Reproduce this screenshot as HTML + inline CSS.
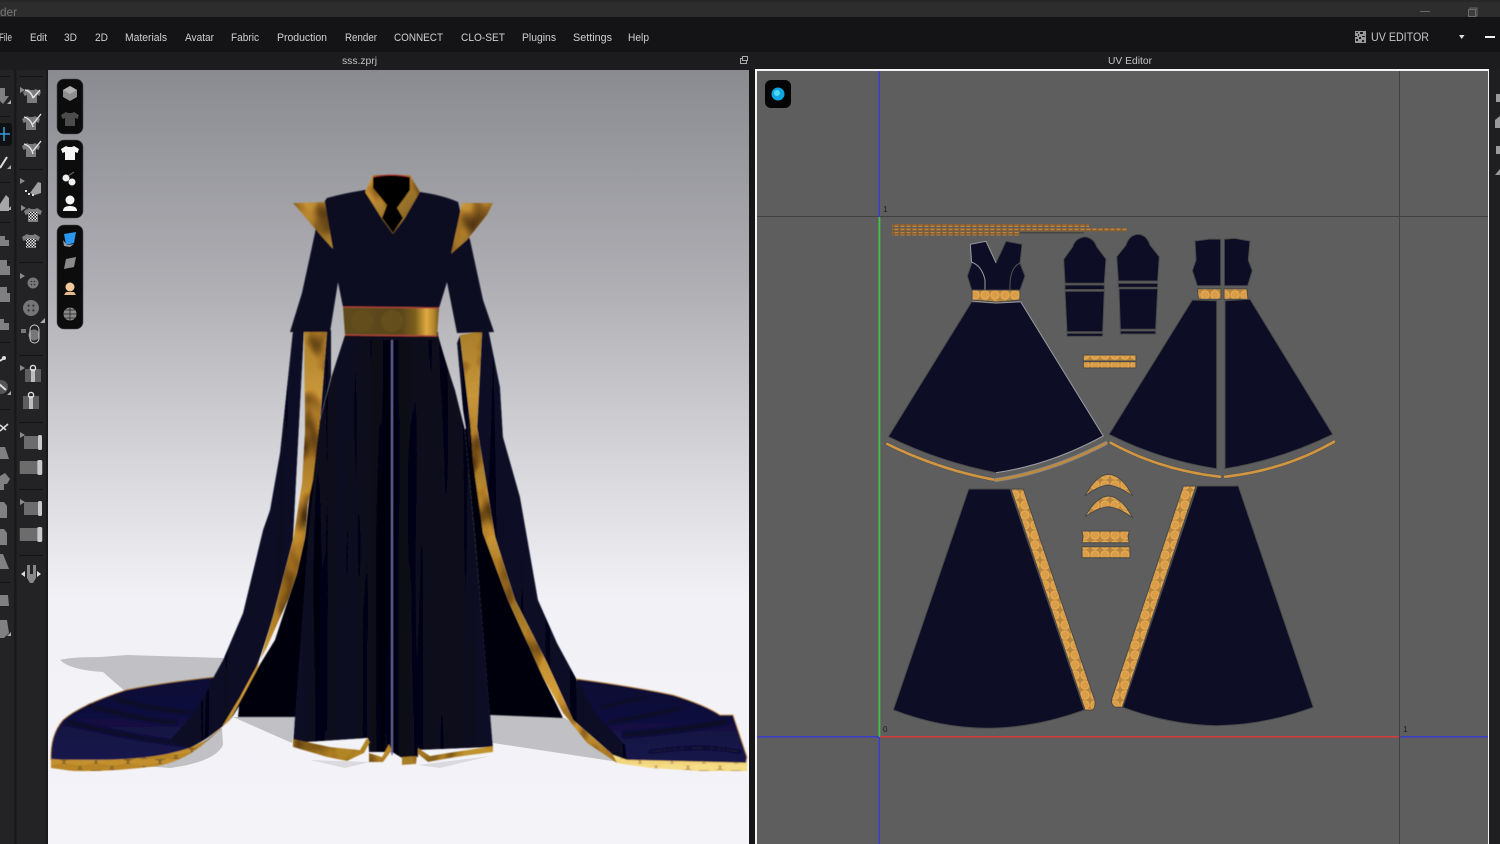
<!DOCTYPE html>
<html><head><meta charset="utf-8"><title>UV Editor</title>
<style>html,body{margin:0;padding:0;background:#161618;width:1500px;height:844px;overflow:hidden}svg{display:block}text{font-family:"Liberation Sans",sans-serif}</style></head>
<body>
<svg xmlns="http://www.w3.org/2000/svg" width="1500" height="844" viewBox="0 0 1500 844">
<defs>
<linearGradient id="vp" x1="0" y1="0" x2="0" y2="1"><stop offset="0" stop-color="#8a8b90"/><stop offset=".27" stop-color="#adadb2"/><stop offset=".54" stop-color="#dcdce0"/><stop offset=".685" stop-color="#f1f1f6"/><stop offset="1" stop-color="#f3f3f8"/></linearGradient>
<pattern id="uvg" width="10" height="10" patternUnits="userSpaceOnUse"><rect width="10" height="10" fill="#b98640"/><circle cx="5" cy="5" r="4.700" fill="#e3a850"/><circle cx="5" cy="5" r="2.600" fill="#dc9d48" stroke="#cf9240" stroke-width=".5"/></pattern>
<pattern id="uvs" width="6" height="3" patternUnits="userSpaceOnUse"><rect width="6" height="3" fill="#7f5c32"/><rect x=".5" y=".6" width="4" height="1.600" fill="#b98645"/></pattern>
<pattern id="chk" width="3" height="3" patternUnits="userSpaceOnUse"><rect width="3" height="3" fill="#eee"/><rect width="1.500" height="1.500" fill="#222"/><rect x="1.500" y="1.500" width="1.500" height="1.500" fill="#222"/></pattern>
<linearGradient id="gold" x1="0" y1="0" x2="0" y2="1"><stop offset="0" stop-color="#a87e2c"/><stop offset=".15" stop-color="#c8963a"/><stop offset=".3" stop-color="#a47628"/><stop offset=".45" stop-color="#d4a03a"/><stop offset=".6" stop-color="#94691f"/><stop offset=".75" stop-color="#c08e30"/><stop offset=".88" stop-color="#dca63c"/><stop offset="1" stop-color="#a07426"/></linearGradient>
<linearGradient id="goldp" x1="0" y1="0" x2="1" y2="1"><stop offset="0" stop-color="#d8a440"/><stop offset=".4" stop-color="#b08232"/><stop offset=".7" stop-color="#8e6a28"/><stop offset="1" stop-color="#b88c34"/></linearGradient>
<linearGradient id="belt" x1="0" y1="0" x2="1" y2="0"><stop offset="0" stop-color="#5e4a1c"/><stop offset=".6" stop-color="#594619"/><stop offset=".75" stop-color="#7c5e1e"/><stop offset=".87" stop-color="#e0a940"/><stop offset=".95" stop-color="#b0842c"/><stop offset="1" stop-color="#6e521c"/></linearGradient>
<linearGradient id="skirt" x1="0" y1="0" x2="1" y2="0"><stop offset="0" stop-color="#0c0c2a"/><stop offset=".12" stop-color="#09091c"/><stop offset=".28" stop-color="#0a0a22"/><stop offset=".42" stop-color="#080818"/><stop offset=".5" stop-color="#060610"/><stop offset=".62" stop-color="#09091e"/><stop offset=".78" stop-color="#08081a"/><stop offset="1" stop-color="#0c0c2a"/></linearGradient>
<linearGradient id="train" x1="0" y1="0" x2="0" y2="1"><stop offset="0" stop-color="#0e0e32"/><stop offset="1" stop-color="#15144c"/></linearGradient>
<pattern id="hex" width="32" height="11" patternUnits="userSpaceOnUse"><rect width="32" height="11" fill="#8a6528"/><ellipse cx="16" cy="3" rx="15" ry="3.800" fill="#c4902f"/><ellipse cx="0" cy="8.500" rx="15" ry="3.800" fill="#b88628"/><ellipse cx="32" cy="8.500" rx="15" ry="3.800" fill="#b88628"/></pattern>
<pattern id="hexp" width="32" height="11" patternUnits="userSpaceOnUse"><rect width="32" height="11" fill="#c8a060"/><ellipse cx="16" cy="3" rx="15" ry="3.800" fill="#f2d67c"/><ellipse cx="0" cy="8.500" rx="15" ry="3.800" fill="#f5dc86"/><ellipse cx="32" cy="8.500" rx="15" ry="3.800" fill="#f5dc86"/></pattern>
<filter id="soft" x="-5%" y="-5%" width="110%" height="110%"><feGaussianBlur stdDeviation=".45"/></filter>
<filter id="soft2" x="-20%" y="-20%" width="140%" height="140%"><feGaussianBlur stdDeviation=".35"/></filter>
<filter id="fold" x="-10%" y="-30%" width="120%" height="160%"><feGaussianBlur stdDeviation="1"/></filter>
<filter id="mottle" x="0" y="0" width="100%" height="100%" color-interpolation-filters="sRGB">
<feTurbulence type="fractalNoise" baseFrequency=".05 .03" numOctaves="2" seed="7" result="n"/>
<feColorMatrix in="n" type="matrix" values="1.600 0 0 0 .15 1.600 0 0 0 .1 1.600 0 0 0 0 0 0 0 0 1" result="g"/>
<feComposite in="SourceGraphic" in2="g" operator="arithmetic" k1="1" k2="0" k3="0" k4="0" result="m"/>
<feComposite in="m" in2="SourceAlpha" operator="in"/>
</filter>
<filter id="velvet" x="0" y="0" width="100%" height="100%" color-interpolation-filters="sRGB">
<feTurbulence type="fractalNoise" baseFrequency=".1 .0025" numOctaves="2" seed="3" result="n"/>
<feColorMatrix in="n" type="matrix" values="2.400 0 0 0 -.2 2.400 0 0 0 -.2 2.800 0 0 0 -.2 0 0 0 0 1" result="g"/>
<feComposite in="SourceGraphic" in2="g" operator="arithmetic" k1="1" k2="0" k3="0" k4="0" result="m"/>
<feComposite in="m" in2="SourceAlpha" operator="in"/>
</filter>
<g id="tee"><path d="M-4,-7 L-2,-6 L2,-6 L4,-7 L9,-4 L7.500,0 L5,-1 L5,7 L-5,7 L-5,-1 L-7.500,0 L-9,-4 Z"/></g>
<g id="flag"><path d="M-11,-7 L-6,-4 L-11,-1 Z" fill="#8a8a8a"/></g>
<g id="roll"><rect x="-9" y="-6" width="14" height="13" fill="#6c6c6c"/><rect x="5" y="-7" width="4" height="15" rx="1.500" fill="#c9c9c9"/></g>
<g id="btn"><circle r="8" fill="#757575"/><circle cx="-2.400" cy="-2.400" r="1.100" fill="#333"/><circle cx="2.400" cy="-2.400" r="1.100" fill="#333"/><circle cx="-2.400" cy="2.400" r="1.100" fill="#333"/><circle cx="2.400" cy="2.400" r="1.100" fill="#333"/></g>
<g id="zip"><rect x="-8" y="-6" width="16" height="13" fill="#5e5e5e"/><rect x="-2" y="-6" width="4" height="13" fill="#bdbdbd"/><circle cy="-7" r="2.600" fill="none" stroke="#ddd" stroke-width="1.400"/></g>
</defs>

<rect width="1500" height="844" fill="#161618"/>
<rect width="1500" height="17" fill="#2d2d2e"/><rect width="1500" height="2" fill="#272728"/>
<rect y="17" width="1500" height="35" fill="#141416"/>
<rect y="52" width="1500" height="18" fill="#1c1c1e"/>
<text x="0" y="16" font-size="12" fill="#787878" textLength="17" lengthAdjust="spacingAndGlyphs">der</text>
<rect x="1420" y="11" width="10" height="1" fill="#686868"/>
<rect x="1470" y="8" width="7" height="8" fill="#2d2d2e" stroke="#6a6a6a"/><rect x="1468.500" y="9.500" width="7" height="7" fill="#3d3d3d" stroke="#6a6a6a"/>
<g font-size="11" fill="#d0d0d0">
<text x="-1" y="41" textLength="13" lengthAdjust="spacingAndGlyphs">File</text>
<text x="30" y="41" textLength="17" lengthAdjust="spacingAndGlyphs">Edit</text>
<text x="64" y="41" textLength="13" lengthAdjust="spacingAndGlyphs">3D</text>
<text x="95" y="41" textLength="13" lengthAdjust="spacingAndGlyphs">2D</text>
<text x="125" y="41" textLength="42" lengthAdjust="spacingAndGlyphs">Materials</text>
<text x="185" y="41" textLength="29" lengthAdjust="spacingAndGlyphs">Avatar</text>
<text x="231" y="41" textLength="28" lengthAdjust="spacingAndGlyphs">Fabric</text>
<text x="277" y="41" textLength="50" lengthAdjust="spacingAndGlyphs">Production</text>
<text x="345" y="41" textLength="32" lengthAdjust="spacingAndGlyphs">Render</text>
<text x="394" y="41" textLength="49" lengthAdjust="spacingAndGlyphs">CONNECT</text>
<text x="461" y="41" textLength="44" lengthAdjust="spacingAndGlyphs">CLO-SET</text>
<text x="522" y="41" textLength="34" lengthAdjust="spacingAndGlyphs">Plugins</text>
<text x="573" y="41" textLength="39" lengthAdjust="spacingAndGlyphs">Settings</text>
<text x="628" y="41" textLength="21" lengthAdjust="spacingAndGlyphs">Help</text>
</g>
<text x="342" y="64" font-size="10.500" fill="#c4c4c4" textLength="35" lengthAdjust="spacingAndGlyphs">sss.zprj</text>
<text x="1108" y="64" font-size="10.500" fill="#c4c4c4" textLength="44" lengthAdjust="spacingAndGlyphs">UV Editor</text>
<rect x="740.500" y="58.500" width="6" height="5" fill="none" stroke="#aaa"/><rect x="742.500" y="56.500" width="5" height="4" fill="#1c1c1e" stroke="#aaa"/>
<rect x="1355" y="31" width="11" height="12" fill="#9a9a9a"/>
<path d="M1356,32h2v1h-2zM1360,32h3v2h-3zM1358,34h1v2h-1zM1355,36h2v1h-2zM1362,36h3v1h-3zM1359,37h2v2h-2zM1356,39h2v2h-2zM1362,40h2v2h-2z" fill="#1a1a1a"/>
<text x="1371" y="41" font-size="12" fill="#c6c6c6" textLength="58" lengthAdjust="spacingAndGlyphs">UV EDITOR</text>
<path d="M1459,35 L1464.500,35 L1461.700,39 Z" fill="#ddd"/>
<rect x="1485" y="36" width="10" height="2" fill="#eee"/>

<rect y="70" width="48" height="774" fill="#232325"/>
<rect x="14" y="70" width="2.500" height="774" fill="#19191b"/>
<rect x="46" y="70" width="2" height="774" fill="#1a1a1c"/>
<g fill="#131315">
<rect x="19" y="76" width="24" height="1"/><rect x="19" y="169" width="24" height="1"/><rect x="19" y="262" width="24" height="1"/><rect x="19" y="355" width="24" height="1"/><rect x="19" y="422" width="24" height="1"/><rect x="19" y="489" width="24" height="1"/><rect x="19" y="555" width="24" height="1"/>
<rect x="0" y="76" width="10" height="1"/><rect x="0" y="116" width="10" height="1"/><rect x="0" y="182" width="10" height="1"/><rect x="0" y="222" width="10" height="1"/><rect x="0" y="262" width="10" height="1"/><rect x="0" y="342" width="10" height="1"/><rect x="0" y="409" width="10" height="1"/><rect x="0" y="582" width="10" height="1"/>
</g>
<g fill="#7c7c7c">
<use href="#tee" x="32" y="96"/><use href="#flag" x="31" y="94"/>
<use href="#tee" x="31" y="123"/><use href="#tee" x="31" y="150"/>
</g>
<g fill="none" stroke="#e6e6e6" stroke-width="1.400">
<path d="M25,90 Q31,91 33,98 M33,98 L40,90"/><path d="M24,117 Q31,119 33,127 M33,124 L41,114"/><path d="M24,144 Q31,146 33,154 M33,151 L41,141"/>
</g>
<use href="#flag" x="31" y="185"/><path d="M30,193 L38,182 L41,183 L41,193 L35,195 Z" fill="#a0a0a0"/><path d="M25,190h2v2h-2zM28,193h2v2h-2zM32,194h2v2h-2z" fill="#ddd"/>
<g fill="#7c7c7c"><use href="#tee" x="33" y="215"/><use href="#tee" x="31" y="241"/></g><use href="#flag" x="32" y="212"/>
<rect x="28" y="212" width="10" height="9" fill="url(#chk)"/><rect x="26" y="238" width="10" height="9" fill="url(#chk)"/>
<use href="#flag" x="31" y="280"/><circle cx="33" cy="283" r="5.500" fill="#777"/><circle cx="31.500" cy="281.500" r=".8" fill="#333"/><circle cx="34.500" cy="281.500" r=".8" fill="#333"/><circle cx="31.500" cy="284.500" r=".8" fill="#333"/><circle cx="34.500" cy="284.500" r=".8" fill="#333"/>
<use href="#btn" x="31" y="308"/><path d="M45,318 L40,323 L45,323 Z" fill="#aaa"/>
<circle cx="34" cy="335" r="5.500" fill="#777"/><rect x="30" y="325" width="9" height="18" rx="4.500" fill="none" stroke="#ccc" stroke-width="1"/><rect x="21" y="329" width="5" height="4" fill="#777"/>
<use href="#flag" x="31" y="372"/><use href="#zip" x="33" y="375"/><use href="#zip" x="31" y="402"/>
<use href="#flag" x="31" y="439"/><use href="#roll" x="33" y="442"/><use href="#roll" transform="translate(31 467) scale(1.250 1)"/>
<use href="#flag" x="31" y="506"/><use href="#roll" x="33" y="508"/><use href="#roll" transform="translate(31 534) scale(1.250 1)"/>
<path d="M27,565 L30,565 L30,574 L33,574 L33,565 L36,565 L36,578 L33,583 L30,583 L27,578 Z" fill="#888"/><path d="M21,574 L25,571 L25,577 Z M41,574 L37,571 L37,577 Z" fill="#ddd"/>
<rect x="-4" y="123" width="16" height="23" rx="3" fill="#0f1012"/>
<path d="M4,127 V141 M-2,134 H10" stroke="#3a9ae0" stroke-width="1.500"/>
<g fill="#808080">
<path d="M0,88 H5 V96 H9 L3,104 L0,101 Z"/>
<path d="M0,204 L6,195 L9,198 V211 H0 Z" fill="#a6a6a6"/>
<path d="M0,236 H5 V240 H9 V246 H0 Z"/><path d="M0,260 H7 V266 H10 V275 H0 Z"/><path d="M0,287 H7 V293 H10 V302 H0 Z"/><path d="M0,319 H4 V323 H9 V330 H0 Z"/>
<circle cx="1" cy="387" r="7" fill="#555"/>
<path d="M0,447 H5 L9,459 H0 Z"/><path d="M0,476 L5,473 L10,479 L7,484 L4,484 V490 H0 Z"/><path d="M0,502 H4 L7,506 V518 H0 Z"/><path d="M0,529 H4 L7,533 V545 H0 Z"/><path d="M0,554 H3 L9,569 H0 Z"/><path d="M0,595 H8 L9,606 H0 Z"/><path d="M0,620 H7 L9,633 L4,638 H0 Z"/>
</g>
<path d="M0,168 L7,157 M0,361 L4,358" stroke="#ddd" stroke-width="2" fill="none"/><circle cx="4" cy="358" r="2" fill="#ddd"/>
<path d="M-1,384 L6,390" stroke="#ddd" stroke-width="2"/><path d="M0,425 L6,430 M0,431 L8,424" stroke="#ddd" stroke-width="1.500"/>
<g fill="#aaa"><path d="M11,100 L7,104 H11Z"/><path d="M11,165 L7,169 H11Z"/><path d="M11,206 L7,210 H11Z"/><path d="M11,391 L7,395 H11Z"/><path d="M11,632 L7,636 H11Z"/></g>

<rect x="48" y="70" width="701" height="774" fill="url(#vp)"/>
<g fill="#c1c1c5" filter="url(#soft2)">
<path d="M60,660 Q70,657 100,657 L127,655 L223,658 L240,700 L190,735 L126,692 L112,680 L103,672 Q70,670 60,660 Z"/>
<path d="M130,765 L190,748 L222,728 L223,745 Q215,762 170,768 Z"/>
<path d="M233,717 L295,717 L292,743 Z"/>
<path d="M490,715 L565,718 L625,763 L493,743 Z"/>
<path d="M310,760 L345,768 L370,762 Z" opacity=".5"/>
<path d="M418,765 L440,768 L490,756 Z" opacity=".5"/>
</g>
<g filter="url(#soft)">
<path d="M215,677 Q160,683 126,690 Q80,705 63,720 Q50,735 51,760 L123,760 Q165,757 190,748 L240,700 L250,670 Z" fill="url(#train)" stroke="#a87838" stroke-width=".8"/>
<path d="M577,679 Q630,686 673,695 Q705,705 720,715 L733,715 L747,757 L746,763 L627,760 L580,710 Z" fill="url(#train)" stroke="#c08c48" stroke-width=".8"/>
<g fill="none" stroke="#09091f" stroke-width="3.500" opacity=".8" filter="url(#fold)" stroke-linecap="round">
<path d="M68,722 Q130,738 190,745"/><path d="M90,706 Q150,722 175,722"/><path d="M115,698 Q150,710 190,712"/>
<path d="M600,708 Q630,700 645,697" stroke-width="2.500"/><path d="M610,722 Q650,716 680,708" stroke-width="3"/><path d="M625,735 Q680,730 725,722" stroke-width="4"/><path d="M650,752 Q700,744 740,752" stroke-width="2"/>
</g>
<path d="M320,400 L305,537 L297,573 L275,640 L240,697 L238,717 L296,717 L320,450 Z" fill="#020208"/>
<path d="M470,420 L483,533 L508,600 L543,677 L563,718 L490,715 L475,537 L465,430 Z" fill="#03030b"/>
<g filter="url(#velvet)">
<path d="M293,330 L287,387 L280,453 L270,510 L263,530 L243,613 L223,660 L213,678 Q200,710 170,740 L190,748 Q210,738 230,720 Q250,695 273,617 L293,540 L304,330 Z" fill="#0a0a26"/>
<path d="M482,331 L488,328 L500,387 L503,437 L520,497 L538,600 L557,643 L577,680 L597,715 L625,745 L627,760 L613,755 L573,720 L547,663 L515,600 L495,537 L477,427 Z" fill="#0a0a26"/>
<path d="M457,343 L460,335 L470,420 L470,453 L463,410 Z" fill="#0a0a24"/>
<path d="M327,330 L331,330 L331,377 L320,420 Z" fill="#0a0a24"/>
</g>
<g filter="url(#mottle)">
<path d="M304,328 L327,330 L320,420 L313,480 L308,503 L305,537 L297,573 L288,600 L267,647 L240,697 L220,730 L200,747 L190,748 L207,740 L230,720 L257,670 L273,617 L293,540 L302,483 L305,430 Z" fill="url(#gold)"/>
<path d="M460,335 L482,331 L477,427 L495,537 L515,600 L547,663 L573,720 L613,755 L627,760 L617,763 L587,743 L563,713 L543,677 L508,600 L483,533 L473,463 L470,420 Z" fill="url(#gold)"/>
</g>
<path d="M51,759 Q90,762 123,759 Q165,757 190,748 L207,740 L200,747 Q180,762 157,766 Q110,772 73,771 L51,768 Z" fill="url(#hex)"/>
<path d="M613,755 L627,760 L747,763 L747,771 L700,771 L650,768 L617,763 Z" fill="url(#hexp)"/>
<path filter="url(#velvet)" d="M345,335 L438,335 Q445,360 455,390 L465,430 L475,537 L493,747 L418,750 L418,757 L402,758 L392,752 L369,752 L368,738 L293,743 L308,537 L320,420 L332,375 Z" fill="url(#skirt)"/>
<path d="M392,234 V755" stroke="#6e6ea8" stroke-width="1.600" fill="none"/>
<g filter="url(#mottle)">
<path d="M293,739 L330,747 L360,750 L367,738 L370,742 L364,753 L347,761 L327,757 L293,747 Z" fill="#b08628"/>
<path d="M369,753 L382,757 L389,744 L392,750 L383,762 L369,762 Z" fill="#b88c2c"/>
<path d="M402,757 L417,756 L416,764 L402,765 Z" fill="#a87e28"/>
<path d="M418,748 L430,756 L448,753 L493,746 L493,752 L456,757 L428,762 L418,754 Z" fill="#c09430"/>
</g>
<path d="M327,198 Q345,193 365,190 L420,192 Q442,195 458,202 Q462,220 470,240 L483,300 L494,332 L457,333 L447,282 L439,308 L343,307 L338,282 L330,332 L290,332 L302,293 L315,233 Q318,210 327,198 Z" fill="#090922"/>
<path d="M345,332 L438,332 L438,340 L345,340 Z" fill="#09091c"/>
<g filter="url(#mottle)">
<path d="M293,203 L325,202 L333,249 L322,237 Z" fill="url(#goldp)"/>
<path d="M493,203 L462,203 L451,254 L467,240 L487,215 Z" fill="url(#goldp)"/>
<path d="M373,175 L410,175 L420,192 L405,218 L393,234 L382,219 L365,192 Z" fill="url(#goldp)"/>
</g>
<path d="M373,177 Q391,173 410,177 L410,190 L397,208 L403,218 L393,233 L382,218 L387,205 L373,188 Z" fill="#000"/>
<path d="M373,177 Q391,173 410,177" stroke="#b03a30" stroke-width="1" fill="none"/>
<path d="M343,307 L439,308 L437,336 L345,335 Z" fill="url(#belt)"/>
<circle cx="362" cy="321" r="11" fill="#6a5420" opacity=".5"/><circle cx="392" cy="321" r="11" fill="#6f5822" opacity=".5"/>
<path d="M343,307 L439,308 M345,335 L437,336" stroke="#b0443a" stroke-width="1.300" fill="none"/>
</g>

<g fill="#0c0c0d" stroke="#48484c" stroke-width=".6">
<rect x="57" y="79" width="26" height="55" rx="7"/><rect x="57" y="140" width="26" height="78" rx="7"/><rect x="57" y="225" width="26" height="104" rx="7"/>
</g>
<path d="M70,86 L77,90 L77,97 L70,101 L63,97 L63,90 Z" fill="#8e8e8e"/><path d="M63,90 L70,94 L77,90 L70,86 Z" fill="#b0b0b0"/>
<use href="#tee" x="70" y="119" fill="#4c4c4c"/>
<use href="#tee" x="70" y="153" fill="#f5f5f5"/>
<circle cx="66" cy="178" r="3.500" fill="#eee"/><circle cx="72" cy="182" r="3.500" fill="#eee"/><path d="M68,176 L74,172" stroke="#777" fill="none"/>
<circle cx="70" cy="200" r="4.500" fill="#f5f5f5"/><path d="M63,211 Q63,206 70,206 Q77,206 77,211 Z" fill="#f5f5f5"/>
<path d="M64,234 L76,232 L74,243 L66,245 Z" fill="#2a96ee"/><path d="M63,240 L67,245 L74,244 L70,247 L64,246 Z" fill="#999"/>
<path d="M66,259 L76,257 L74,267 L64,269 Z" fill="#8a8a8a"/>
<circle cx="70" cy="287" r="4.500" fill="#f0c89c"/><path d="M64,295 H76 L74,292 H66 Z" fill="#e8b888"/>
<circle cx="70" cy="314" r="6.500" fill="#8a8a8a"/><path d="M63.500,314 H76.500 M70,307.500 V320.500 M65,310 H75 M65,318 H75" stroke="#222" stroke-width=".8"/>

<rect x="755" y="69" width="734" height="775" fill="#fff" opacity=".95"/>
<rect x="757" y="71" width="731" height="773" fill="#5e5e5e"/>
<rect x="1489" y="70" width="11" height="774" fill="#1f1f21"/>
<g fill="#9a9a9a"><rect x="1496" y="94" width="4" height="8"/><path d="M1495,128 V120 L1500,116 V128Z"/><path d="M1496,146 H1500 V154 H1496Z"/><path d="M1495,175 L1500,169 V175Z"/></g>
<rect x="757" y="216" width="731" height="1" fill="#414141"/>
<rect x="1399" y="71" width="1" height="773" fill="#414141"/>
<rect x="878.500" y="71" width="1.500" height="146" fill="#3c3ccc"/>
<rect x="878.500" y="737" width="1.500" height="107" fill="#3c3ccc"/>
<rect x="878.500" y="217" width="1.800" height="520" fill="#44c04c"/>
<rect x="757" y="736" width="122" height="1.500" fill="#3c3ccc"/>
<rect x="880" y="736" width="519" height="1.500" fill="#d83a3a"/>
<rect x="1400" y="736" width="88" height="1.500" fill="#3c3ccc"/>
<g font-size="8" fill="#1e1e1e"><text x="883" y="212">1</text><text x="883" y="732">0</text><text x="1403" y="732">1</text></g>
<rect x="765" y="80" width="26" height="28" rx="6" fill="#050505"/>
<circle cx="778" cy="94" r="6.500" fill="#0ea5e0"/><circle cx="777" cy="93" r="3" fill="#4dd8f5"/>

<g filter="url(#soft2)">
<rect x="892" y="224" width="197" height="3" fill="url(#uvs)"/>
<rect x="892" y="228" width="235" height="3.500" fill="url(#uvs)"/>
<rect x="892" y="232" width="128" height="3.500" fill="url(#uvs)"/>
<rect x="1020" y="232" width="64" height="1.500" fill="#454545"/>
<g fill="#0e0d26" stroke="#4a4a4a" stroke-width="1">
<path d="M970.300,244.300 L986,241.300 L996,262.700 L1006,241.300 L1022,244.300 L1020,263.300 L1025,276 L1020,290 L971.700,290 L967.300,276 L971.700,263.300 Z"/>
<path d="M971.700,301.700 L996,303.300 L1020.700,301.700 L1103.300,436 Q1050,465 996,472.700 Q940,462 888.300,436.700 Z"/>
<path d="M1085,236.700 Q1075,238 1072.700,246.700 L1063.700,259.300 L1065,283.300 H1104.300 L1106,259 L1096.700,246.700 Q1094,238 1085,236.700 Z"/>
<rect x="1065" y="285" width="39.300" height="4.500"/>
<path d="M1065,291.300 H1104.300 L1102.700,331.700 H1067 Z"/>
<rect x="1067" y="333.300" width="35.700" height="3"/>
<path d="M1138.300,234.300 Q1129,235 1126,245 L1116.700,256.700 L1118.300,281 H1157.700 L1159.300,256.700 L1150,245 Q1147,235 1138.300,234.300 Z"/>
<rect x="1118.300" y="283.300" width="39.400" height="4"/>
<path d="M1119,288.700 H1157.700 L1155.700,329.300 H1120.300 Z"/>
<rect x="1120.300" y="331" width="35.400" height="3"/>
<path d="M1195,241 L1210,239 L1220.700,239.300 V285.700 H1197.300 L1192.300,270.700 L1196,260 Z"/>
<path d="M1224.300,239.300 L1234.300,238.300 L1250,241 L1248.300,260 L1252.300,270.700 L1247.700,285.700 H1224.300 Z"/>
<path d="M1192.300,300 L1216.700,300.700 V468.700 Q1160,460 1109,434.300 Z"/>
<path d="M1225,300.700 L1250,299.300 L1332.700,434.300 Q1280,460 1225,468.700 Z"/>
<path d="M968.700,489 H1010 L1084.300,710 Q1035,728 987,728.300 Q940,728 893.300,710 Z"/>
<path d="M1197.300,486 H1238.300 L1313.300,707.300 Q1265,725 1216.700,725.700 Q1170,725 1122.700,707.300 Z"/>
</g>
<g fill="none" stroke="#9a9aa0" stroke-width="1">
<path d="M996,262.700 L986,241.300 L970.300,244.300 L971.500,262 Q982,266 985,280 L985,290"/>
<path d="M1020.700,301.700 L1103.300,436 Q1050,465 996,472.700"/>
<path d="M972,301 L996,303 L1020.700,301.700"/>
</g>
<path d="M1010,290 Q1009,268 1020,263" fill="none" stroke="#555" stroke-width="1"/>
<g fill="url(#uvg)" stroke="#4a4a4a" stroke-width="1">
<path d="M972,290 H1020 L1020,300 L997,302 L972,300 Z"/>
<rect x="1083.300" y="355" width="52.700" height="6"/>
<rect x="1083.300" y="361.700" width="52.700" height="6.300"/>
<path d="M1197.300,288.700 H1221 V299.300 H1198.500 Z"/>
<path d="M1224,288.700 H1247 L1248,299.300 H1224 Z"/>
<path d="M1011,489 H1023.300 L1095,701 Q1096,710 1090,710.700 L1085,710 Z"/>
<path d="M1183.300,486 H1196 L1122.300,707.300 L1115,707.300 Q1110,704 1112,698 Z"/>
<path d="M1085,496 Q1096,475 1108.300,474.300 Q1122,475 1132.700,496 Q1118,486 1108.300,485 Q1098,486 1085,496 Z"/>
<path d="M1085,516.700 Q1096,497 1108.300,496 Q1122,497 1132.700,517.700 Q1118,507.500 1108.300,506.700 Q1098,507.500 1085,516.700 Z"/>
<path d="M1082,531 H1129.300 L1128,536.500 L1129.300,542.700 H1082 L1083,536.500 Z"/>
<path d="M1082,546.700 H1130 V557.700 H1082 Z"/>
</g>
<g fill="none" stroke-linecap="round">
<path d="M887.300,444 Q940,470 996,480" stroke="#555" stroke-width="3.800"/><path d="M887.300,444 Q940,470 996,480" stroke="#d2953f" stroke-width="2.600" stroke-dasharray="7 1"/>
<path d="M996,480 Q1050,472 1105.700,443.300" stroke="#888" stroke-width="4"/><path d="M996,480 Q1050,472 1105.700,443.300" stroke="#c08a3c" stroke-width="2.400" stroke-dasharray="7 1"/>
<path d="M1110.700,442.700 Q1160,470 1220,476.700" stroke="#555" stroke-width="3.800"/><path d="M1110.700,442.700 Q1160,470 1220,476.700" stroke="#d2953f" stroke-width="2.600" stroke-dasharray="7 1"/>
<path d="M1225,476.700 Q1285,470 1334,441.700" stroke="#555" stroke-width="3.800"/><path d="M1225,476.700 Q1285,470 1334,441.700" stroke="#d2953f" stroke-width="2.600" stroke-dasharray="7 1"/>
</g>
</g>
</svg>
</body></html>
